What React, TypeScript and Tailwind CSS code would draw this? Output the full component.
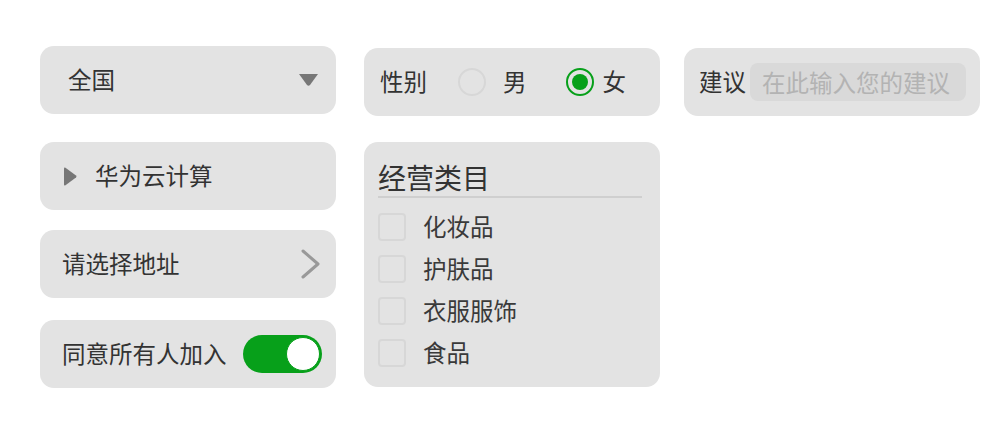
const font = { fontFamily: '"Noto Sans CJK SC", "Noto Sans", sans-serif' };

function Card({ className = "", children }: { className?: string; children: React.ReactNode }) {
  return <div className={`bg-[#e3e3e3] rounded-[14px] ${className}`}>{children}</div>;
}

function Checkbox({ label }: { label: string }) {
  return (
    <div className="flex items-center h-[42px]">
      <div className="w-[28px] h-[28px] rounded-[4px] border-2 border-[#d7d7d7] shrink-0"></div>
      <span className="ml-[17px] text-[23.5px] leading-none text-[#3a3a3a]">{label}</span>
    </div>
  );
}

export default function App() {
  return (
    <div className="w-[1000px] h-[430px] bg-white flex pl-10 pt-[46px]" style={font}>
      {/* column 1 */}
      <div className="flex flex-col w-[296px]">
        <Card className="h-[68px] flex items-center justify-between pl-[28px] pr-[18px]">
          <span className="text-[23.5px] leading-none text-[#333]">全国</span>
          <svg width="19" height="12" viewBox="0 0 19 12">
            <path d="M0 0 H19 L11 11 Q9.5 12.5 8 11 Z" fill="#777" />
          </svg>
        </Card>
        <Card className="mt-[28px] h-[68px] flex items-center pl-[24px]">
          <svg width="13" height="19" viewBox="0 0 13 19">
            <path d="M0 1.5 Q0 0 1.5 0.8 L12 8.5 Q13 9.5 12 10.5 L1.5 18.2 Q0 19 0 17.5 Z" fill="#777" />
          </svg>
          <span className="ml-[18px] text-[23.5px] leading-none text-[#333]">华为云计算</span>
        </Card>
        <Card className="mt-[20px] h-[68px] flex items-center justify-between pl-[22px] pr-[15px]">
          <span className="text-[23.5px] leading-none text-[#333]">请选择地址</span>
          <svg width="20" height="30" viewBox="0 0 20 30">
            <polyline points="2,2 17,15 2,28" fill="none" stroke="#999" strokeWidth="3" strokeLinecap="round" strokeLinejoin="round" />
          </svg>
        </Card>
        <Card className="mt-[22px] h-[68px] flex items-center justify-between pl-[22px] pr-[14px]">
          <span className="text-[23.5px] leading-none text-[#333]">同意所有人加入</span>
          <div className="w-[79px] h-[38px] rounded-full bg-[#07a01a] flex items-center justify-end pr-[2px]">
            <div className="w-[34px] h-[34px] rounded-full bg-white border border-[#07a01a]"></div>
          </div>
        </Card>
      </div>

      {/* column 2 */}
      <div className="flex flex-col w-[296px] ml-[28px] pt-[2px]">
        <Card className="h-[68px] flex items-center pl-[16px]">
          <span className="text-[23.5px] leading-none text-[#333]">性别</span>
          <div className="ml-[31px] w-[28px] h-[28px] rounded-full border-2 border-[#d7d7d7]"></div>
          <span className="ml-[17px] text-[23.5px] leading-none text-[#333]">男</span>
          <div className="ml-[39px] w-[28px] h-[28px] rounded-full border-2 border-[#07a01a] flex items-center justify-center">
            <div className="w-[16px] h-[16px] rounded-full bg-[#07a01a]"></div>
          </div>
          <span className="ml-[9px] text-[23.5px] leading-none text-[#333]">女</span>
        </Card>
        <Card className="mt-[26px] h-[245px] px-[14px] pt-[16px]">
          <div className="h-[40px] leading-[38px] text-[28px] text-[#333] border-b-2 border-[#cfcfcf] mr-[4px]">经营类目</div>
          <div className="mt-[8px] flex flex-col">
            <Checkbox label="化妆品" />
            <Checkbox label="护肤品" />
            <Checkbox label="衣服服饰" />
            <Checkbox label="食品" />
          </div>
        </Card>
      </div>

      {/* column 3 */}
      <div className="flex flex-col w-[296px] ml-[24px] pt-[2px]">
        <Card className="h-[68px] flex items-center pl-[15px] pr-[14px]">
          <span className="text-[23.5px] leading-none text-[#333] shrink-0">建议</span>
          <input
            className="ml-[4px] flex-1 min-w-0 h-[38px] rounded-[8px] bg-[#d9d9d9] px-[12px] text-[23.5px] text-[#333] placeholder:text-[#b3b3b3] outline-none"
            placeholder="在此输入您的建议"
            style={font}
          />
        </Card>
      </div>
    </div>
  );
}
